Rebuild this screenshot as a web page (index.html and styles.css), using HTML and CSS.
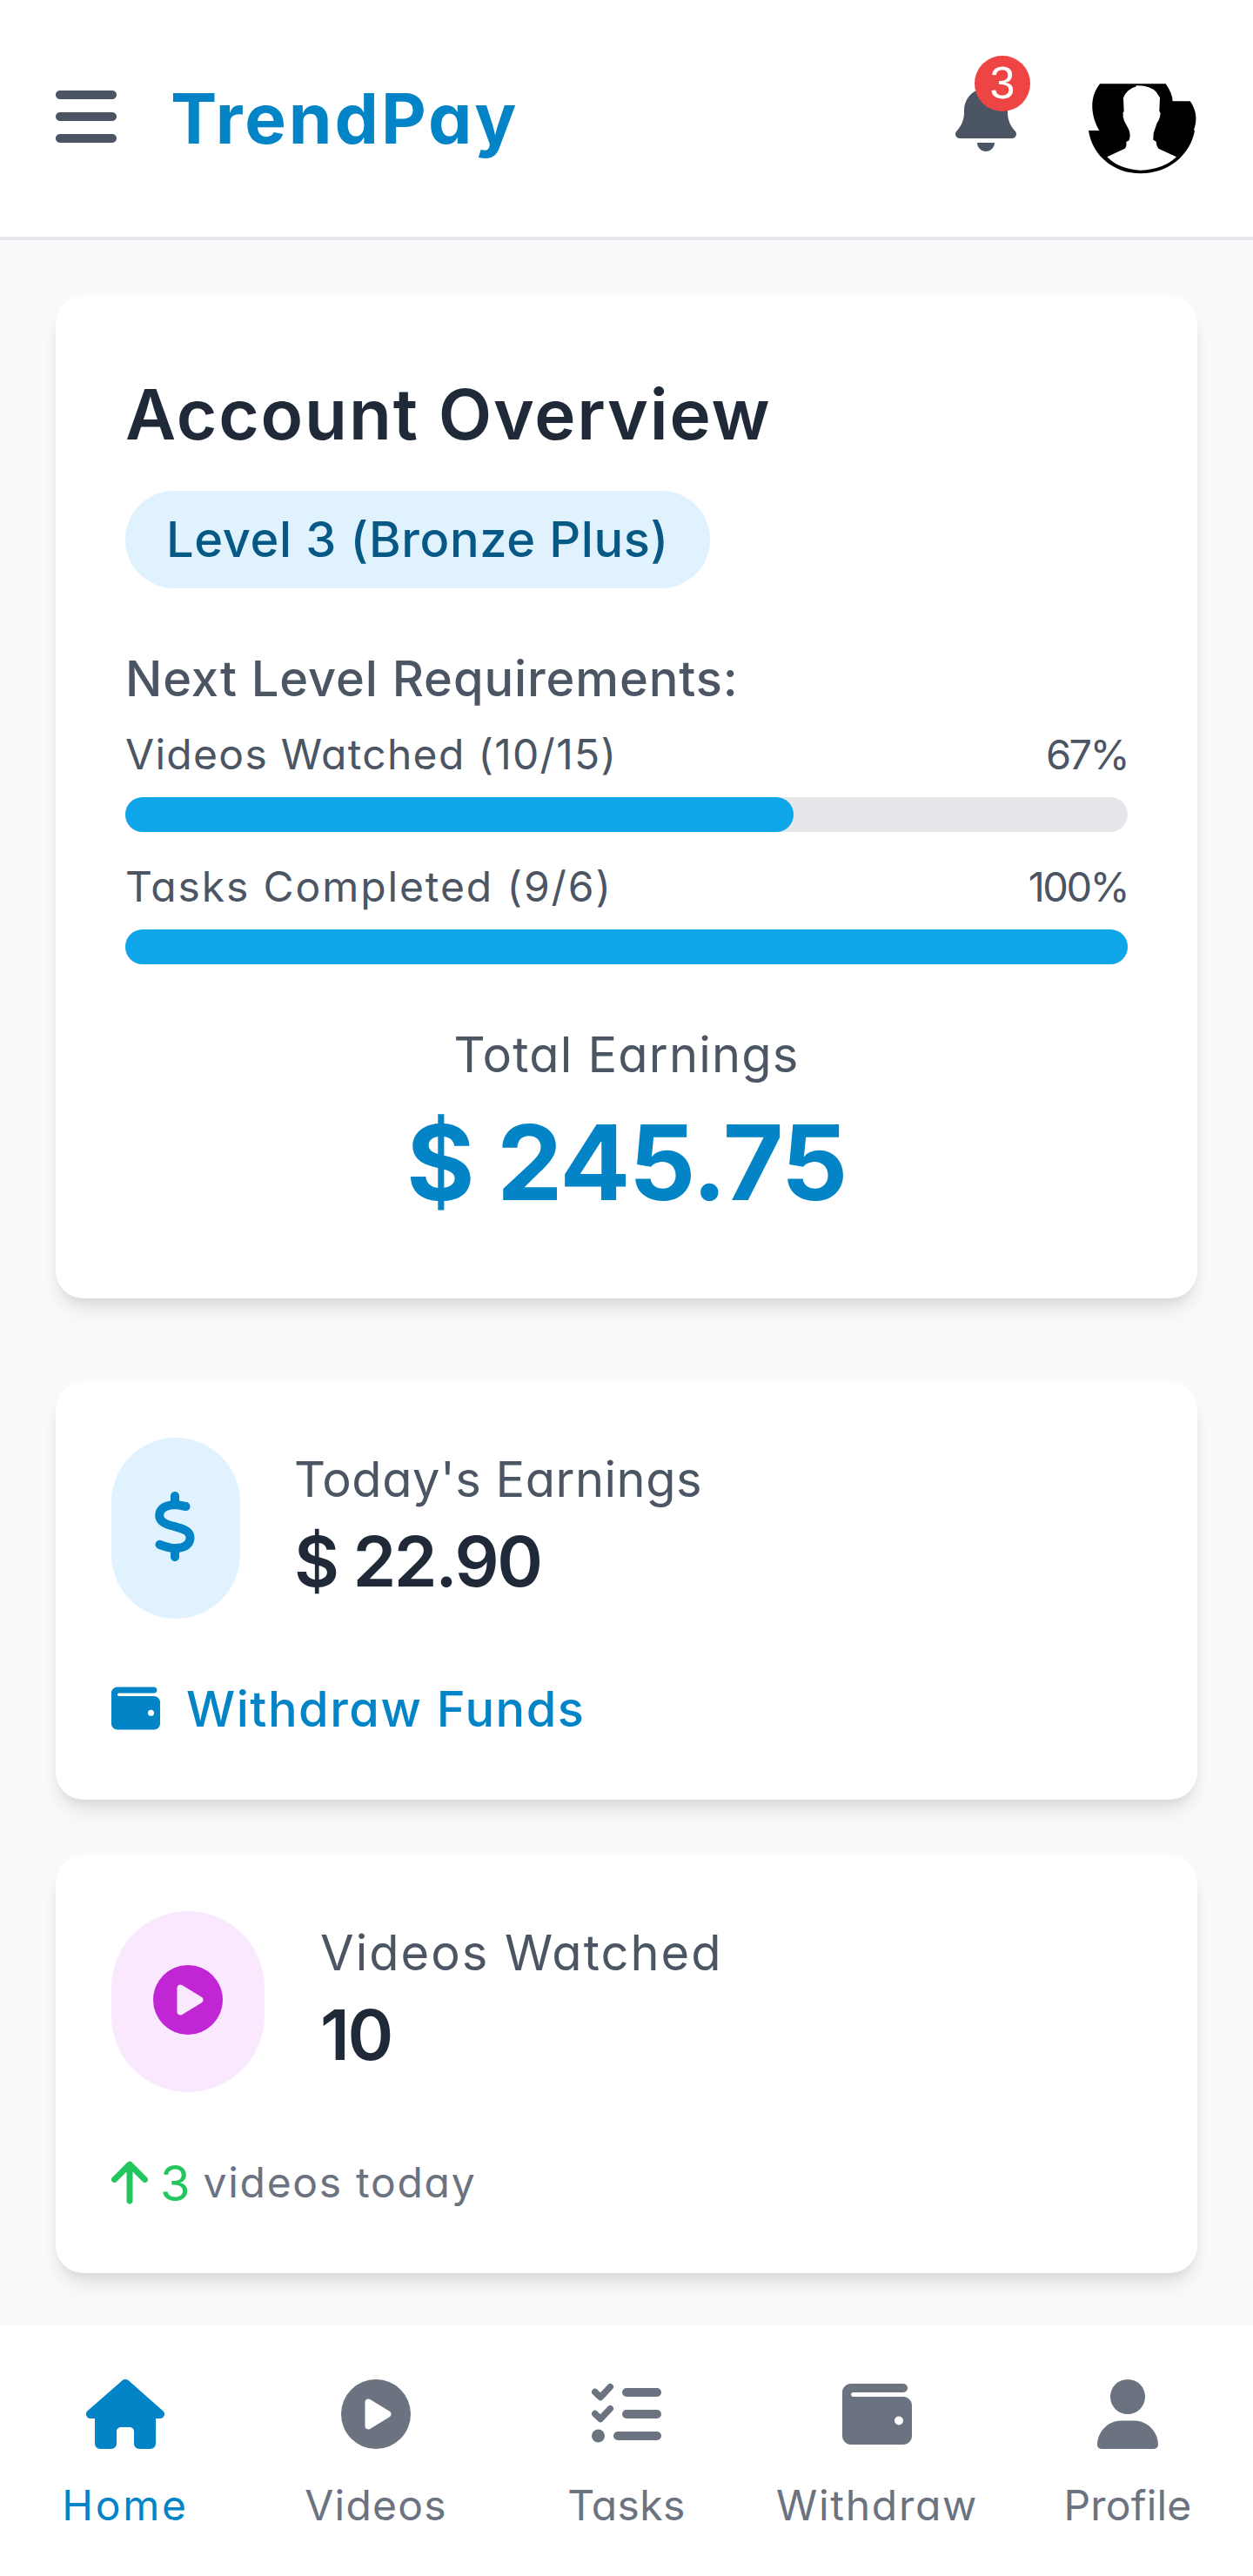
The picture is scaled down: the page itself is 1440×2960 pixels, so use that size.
FILE: index.html
```html
<!DOCTYPE html>
<html lang="en">
<head>
<meta charset="utf-8">
<title>TrendPay</title>
<link rel="stylesheet" href="styles.css">
</head>
<body>
<svg class="sprite" aria-hidden="true">
  <symbol id="wallet" viewBox="0 0 512 512"><path d="M64 32C28.700 32 0 60.700 0 96V416c0 35.300 28.700 64 64 64H448c35.300 0 64-28.700 64-64V192c0-35.300-28.700-64-64-64H80c-8.800 0-16-7.200-16-16s7.200-16 16-16H448c17.700 0 32-14.300 32-32s-14.300-32-32-32H64zM416 272a32 32 0 1 1 0 64 32 32 0 1 1 0-64z"/></symbol>
  <symbol id="play" viewBox="0 0 512 512"><path fill-rule="evenodd" d="M0 256a256 256 0 1 1 512 0A256 256 0 1 1 0 256zM188.300 147.100c-7.600 4.200-12.300 12.300-12.300 20.900V344c0 8.700 4.700 16.700 12.300 20.900s16.800 4.100 24.300-.5l144-88c7.100-4.400 11.500-12.100 11.500-20.500s-4.400-16.100-11.500-20.500l-144-88c-7.400-4.500-16.700-4.700-24.300-.5z"/></symbol>
</svg>

<header class="header">
  <svg class="menu" viewBox="0 0 448 512"><path d="M0 96C0 78.300 14.300 64 32 64H416c17.700 0 32 14.300 32 32s-14.300 32-32 32H32C14.300 128 0 113.700 0 96zM0 256c0-17.700 14.300-32 32-32H416c17.700 0 32 14.300 32 32s-14.300 32-32 32H32c-17.700 0-32-14.300-32-32zM448 416c0 17.700-14.300 32-32 32H32c-17.700 0-32-14.300-32-32s14.300-32 32-32H416c17.700 0 32 14.300 32 32z"/></svg>
  <h1 class="logo">TrendPay</h1>
  <div class="bell">
    <svg viewBox="0 0 448 512"><path d="M224 0c-17.700 0-32 14.300-32 32V51.200C119 66 64 130.600 64 208v18.800c0 47-17.300 92.400-48.500 127.600l-7.400 8.300c-8.400 9.400-10.400 22.900-5.300 34.400S19.400 416 32 416H416c12.600 0 24-7.400 29.200-18.900s3.100-25-5.300-34.400l-7.400-8.300C401.300 319.200 384 273.900 384 226.800V208c0-77.400-55-142-128-156.800V32c0-17.700-14.300-32-32-32zm45.300 493.300c12-12 18.700-28.300 18.700-45.300H160c0 17 6.700 33.300 18.700 45.300s28.300 18.700 45.300 18.700s33.300-6.700 45.300-18.700z"/></svg>
    <span class="badge">3</span>
  </div>
  <svg class="avatar" viewBox="24 -36 384 384">
    <path d="M72 37H299Q322 70 323 97H383C401 122 411 155 396 196L399 198C385 280 310 346 213 346C115 346 45 280 33 198H70C40 145 35 85 72 37Z"/>
    <path fill="#fff" d="M97 289L158 260Q165 255 163 237L173 232Q179 212 172 195L156 165Q150 152 152 135L155 133L153 85Q165 55 198 46L196 43Q245 41 267 66L279 85L277 131L281 138Q279 160 269 172L257 208L256 230L266 236Q266 250 274 260L336 289Q290 333 213 335Q140 333 97 289Z"/>
  </svg>
</header>

<main class="main">
  <section class="card overview">
    <h2 class="title">Account Overview</h2>
    <span class="level">Level 3 (Bronze Plus)</span>
    <h3 class="next">Next Level Requirements:</h3>
    <div class="row"><span class="videos-req">Videos Watched (10/15)</span><span class="pct">67%</span></div>
    <div class="bar"><div class="fill" style="width:66.67%"></div></div>
    <div class="row second"><span class="tasks-req">Tasks Completed (9/6)</span><span class="pct">100%</span></div>
    <div class="bar"><div class="fill" style="width:100%"></div></div>
    <p class="total-label">Total Earnings</p>
    <p class="total">$ 245.75</p>
  </section>

  <section class="card stat">
    <div class="head">
      <div class="bubble money"><svg viewBox="0 0 320 512"><path d="M160 0c17.700 0 32 14.300 32 32V67.700c1.600 .2 3.100 .4 4.700 .7c.4 .1 .7 .1 1.100 .2l48 8.800c17.400 3.200 28.900 19.900 25.700 37.200s-19.900 28.900-37.200 25.700l-47.500-8.700c-31.300-4.600-58.900-1.500-78.300 6.200s-27.200 18.300-29 28.100c-2 10.700-.5 16.700 1.200 20.400c1.800 3.900 5.500 8.300 12.800 13.200c16.300 10.700 41.300 17.700 73.700 26.300l2.900 .8c28.600 7.600 63.600 16.800 89.600 33.800c14.200 9.300 27.600 21.900 35.900 39.500c8.500 17.900 10.300 37.900 6.400 59.200c-6.900 38-33.100 63.400-65.600 76.700c-13.700 5.600-28.600 9.200-44.400 11V480c0 17.700-14.300 32-32 32s-32-14.300-32-32V445.100c-.4-.1-.9-.1-1.300-.2l-.2 0c-24.400-3.800-64.500-14.300-91.500-26.300c-16.100-7.200-23.400-26.100-16.200-42.200s26.100-23.400 42.200-16.200c20.900 9.300 55.300 18.500 75.200 21.600c31.900 4.700 58.200 2 76-5.300c16.900-6.900 24.600-16.900 26.800-28.900c1.900-10.600 .4-16.700-1.300-20.400c-1.900-4-5.600-8.400-13-13.300c-16.400-10.700-41.500-17.700-74-26.300l-2.800-.7C119.400 279.300 84.400 270 58.400 253c-14.200-9.300-27.500-22-35.800-39.600c-8.400-17.900-10.100-37.900-6.100-59.200C23.700 116 52.300 91.200 84.800 78.300c13.300-5.300 27.900-8.900 43.200-11V32c0-17.700 14.300-32 32-32z"/></svg></div>
      <div class="figures">
        <p class="label today">Today's Earnings</p>
        <p class="value">$ 22.90</p>
      </div>
    </div>
    <a class="foot withdraw"><svg><use href="#wallet"/></svg><span>Withdraw Funds</span></a>
  </section>

  <section class="card stat">
    <div class="head">
      <div class="bubble video"><svg><use href="#play"/></svg></div>
      <div class="figures">
        <p class="label watched">Videos Watched</p>
        <p class="value">10</p>
      </div>
    </div>
    <div class="foot trend">
      <svg viewBox="0 0 384 512"><path d="M214.600 41.400c-12.500-12.500-32.800-12.500-45.300 0l-160 160c-12.500 12.500-12.500 32.800 0 45.300s32.800 12.500 45.300 0L160 141.200V448c0 17.700 14.300 32 32 32s32-14.300 32-32V141.200L329.400 246.600c12.500 12.500 32.800 12.500 45.300 0s12.500-32.800 0-45.300l-160-160z"/></svg>
      <span class="count">3</span><span class="note">videos today</span>
    </div>
  </section>
</main>

<nav class="nav">
  <a class="tab active"><svg class="wide" viewBox="0 0 576 512"><path d="M575.800 255.500c0 18-15 32.100-32 32.100h-32l.7 160.200c0 2.700-.2 5.400-.5 8.100V472c0 22.100-17.900 40-40 40H456c-1.100 0-2.200 0-3.300-.1c-1.400 .1-2.800 .1-4.200 .1H392c-22.100 0-40-17.900-40-40V384c0-17.700-14.300-32-32-32H256c-17.700 0-32 14.300-32 32v88c0 22.100-17.900 40-40 40H128.100c-1.500 0-3-.1-4.500-.2c-1.200 .1-2.400 .2-3.600 .2H104c-22.100 0-40-17.900-40-40V360c0-.9 0-1.900 .1-2.800V287.600H32c-18 0-32-14-32-32.100c0-9 3-17 10-24L266.400 8c7-7 15-8 22-8s15 2 21 7L564.800 231.500c8 7 12 15 11 24z"/></svg><span class="t-home">Home</span></a>
  <a class="tab"><svg><use href="#play"/></svg><span class="t-videos">Videos</span></a>
  <a class="tab"><svg viewBox="0 0 512 512"><g fill="none" stroke="currentColor" stroke-linecap="round" stroke-linejoin="round"><path stroke-width="48" d="M24 93L64 132L136 56M24 253L64 292L136 216"/><path stroke-width="64" d="M256 96H480M256 256H480M192 416H480"/></g><circle cx="48" cy="416" r="48"/></svg><span class="t-tasks">Tasks</span></a>
  <a class="tab"><svg><use href="#wallet"/></svg><span class="t-withdraw">Withdraw</span></a>
  <a class="tab"><svg viewBox="0 0 448 512"><path d="M224 256A128 128 0 1 0 224 0a128 128 0 1 0 0 256zm-45.700 48C79.800 304 0 383.800 0 482.300C0 498.700 13.300 512 29.700 512H418.300c16.400 0 29.700-13.300 29.700-29.700C448 383.800 368.200 304 269.700 304H178.300z"/></svg><span class="t-profile">Profile</span></a>
</nav>
</body>
</html>
```
FILE: styles.css
```css
* { box-sizing: border-box; margin: 0; padding: 0; }
body {
  width: 1440px;
  background: #f9fafb;
  color: #4b5563;
  font-family: Inter, "Open Sans", sans-serif;
  font-feature-settings: "cv11";
  white-space: nowrap;
}
svg { display: block; fill: currentColor; flex: none; }
.sprite { display: none; }

.header {
  display: flex;
  align-items: center;
  height: 276px;
  padding: 0 64px;
  background: #fff;
  border-bottom: 4px solid #e5e7eb;
}
.menu { width: 70px; height: 80px; margin: 0 62px 4px 0; }
.logo { font-size: 80px; font-weight: 700; line-height: 112px; letter-spacing: 2.900px; color: #0284c7; }
.bell { position: relative; margin: 0 80px 4px auto; }
.bell svg { width: 70px; height: 80px; }
.badge {
  position: absolute;
  left: 22px;
  top: -30px;
  width: 64px;
  height: 64px;
  border-radius: 50%;
  background: #ef4444;
  color: #fff;
  font: 52px/63px "Liberation Sans", Arial, sans-serif;
  text-align: center;
}
.avatar { width: 128px; height: 128px; color: #000; }

.main { padding: 64px 64px 60px; }
.card {
  background: #fff;
  border-radius: 32px;
  box-shadow: 0 16px 24px -4px rgba(0, 0, 0, .1), 0 8px 16px -8px rgba(0, 0, 0, .1);
}
.overview { height: 1152px; padding: 80px; margin-bottom: 96px; }
.title { font-size: 80px; font-weight: 600; line-height: 112px; letter-spacing: 1.800px; color: #1f2937; }
.level {
  display: block;
  width: 672px;
  margin: 32px 0 64px;
  padding-left: 47px;
  border-radius: 56px;
  background: #e0f2fe;
  color: #075985;
  font-size: 56px;
  font-weight: 500;
  line-height: 112px;
  letter-spacing: .6px;
}
.next { margin-bottom: 16px; font-size: 56px; font-weight: 500; line-height: 80px; letter-spacing: .9px; }
.row { display: flex; justify-content: space-between; margin-bottom: 18px; font-size: 48px; line-height: 62px; }
.second { margin-top: 32px; }
.videos-req { letter-spacing: 1.300px; }
.tasks-req { letter-spacing: 1.900px; }
.pct { font-size: 47px; letter-spacing: -2.600px; }
.bar { height: 40px; border-radius: 20px; background: #e5e7eb; }
.fill { height: 100%; border-radius: 20px; background: #0ea5e9; }
.total-label { margin-top: 64px; text-align: center; font-size: 56px; line-height: 80px; letter-spacing: 1.200px; }
.total { margin-top: 8px; text-align: center; font-size: 120px; font-weight: 700; line-height: 152px; letter-spacing: -1.500px; color: #0284c7; }

.stat { height: 480px; padding: 64px; }
.stat + .stat { margin-top: 64px; }
.head { display: flex; gap: 64px; height: 208px; margin-bottom: 64px; }
.bubble { height: 208px; padding: 62px 48px 0; border-radius: 80px; }
.bubble svg { width: 80px; height: 80px; }
.money { width: 148px; margin-right: -2px; background: #e0f2fe; color: #0284c7; }
.money svg { width: 50px; }
.video { width: 176px; background: #fae8ff; color: #c026d3; border-radius: 88px; }
.figures { padding-top: 8px; }
.label { font-size: 56px; line-height: 80px; }
.today { letter-spacing: .5px; }
.watched { letter-spacing: 2px; }
.value { font-size: 80px; font-weight: 600; line-height: 108px; letter-spacing: -2.400px; color: #1f2937; }
.foot { display: flex; align-items: center; font-size: 56px; line-height: 80px; }
.foot svg { height: 56px; margin-bottom: 2px; }
.withdraw { color: #0284c7; font-weight: 500; letter-spacing: 1.500px; }
.withdraw svg { width: 56px; margin-right: 30px; }
.trend { color: #22c55e; }
.trend svg { width: 42px; margin-right: 14px; }
.note { margin: 0 0 2px 15px; font-size: 48px; letter-spacing: 1.700px; color: #6b7280; }

.nav {
  position: relative;
  display: grid;
  grid-template-columns: repeat(5, 288px);
  height: 288px;
  padding-top: 62px;
  background: #fff;
  box-shadow: 0 40px 60px -12px rgba(0, 0, 0, .1), 0 16px 24px -8px rgba(0, 0, 0, .1);
}
.tab { display: flex; flex-direction: column; align-items: center; gap: 33px; color: #6b7280; font-size: 48px; line-height: 64px; }
.tab svg { width: 80px; height: 80px; }
.tab .wide { width: 90px; }
.active { color: #0284c7; }
.t-home { letter-spacing: 2.700px; }
.t-videos { letter-spacing: 1.200px; }
.t-tasks { letter-spacing: .4px; }
.t-withdraw { letter-spacing: 1.700px; }
.t-profile { letter-spacing: .2px; }
```
